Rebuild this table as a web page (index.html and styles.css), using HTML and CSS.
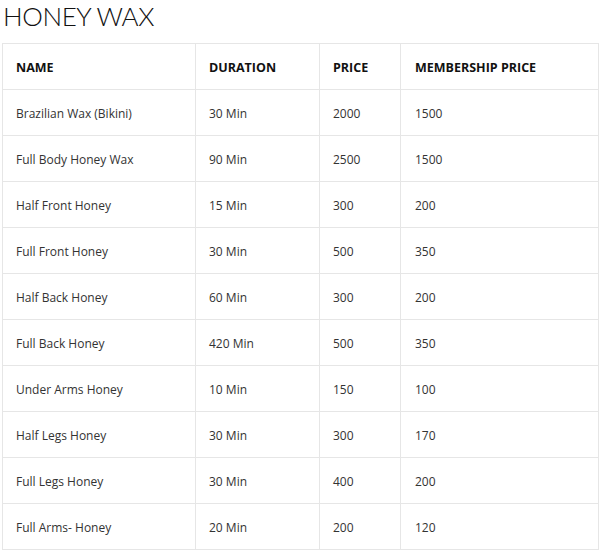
FILE: index.html
```html
<!DOCTYPE html>
<html>
<head>
<meta charset="utf-8">
<link rel="stylesheet" href="styles.css">
</head>
<body>
<h1 class="title">HONEY WAX</h1>
<table class="prices">
<thead>
<tr><th class="c1">NAME</th><th class="c2">DURATION</th><th class="c3">PRICE</th><th class="c4">MEMBERSHIP PRICE</th></tr>
</thead>
<tbody>
<tr><td>Brazilian Wax (Bikini)</td><td>30 Min</td><td>2000</td><td>1500</td></tr>
<tr><td>Full Body Honey Wax</td><td>90 Min</td><td>2500</td><td>1500</td></tr>
<tr><td>Half Front Honey</td><td>15 Min</td><td>300</td><td>200</td></tr>
<tr><td>Full Front Honey</td><td>30 Min</td><td>500</td><td>350</td></tr>
<tr><td>Half Back Honey</td><td>60 Min</td><td>300</td><td>200</td></tr>
<tr><td>Full Back Honey</td><td>420 Min</td><td>500</td><td>350</td></tr>
<tr><td>Under Arms Honey</td><td>10 Min</td><td>150</td><td>100</td></tr>
<tr><td>Half Legs Honey</td><td>30 Min</td><td>300</td><td>170</td></tr>
<tr><td>Full Legs Honey</td><td>30 Min</td><td>400</td><td>200</td></tr>
<tr><td>Full Arms- Honey</td><td>20 Min</td><td>200</td><td>120</td></tr>
</tbody>
</table>
</body>
</html>
```
FILE: styles.css
```css
html, body { margin: 0; padding: 0; background: #fff; }
body { padding: 0 0 0 2px; font-family: "Open Sans", sans-serif; color: #222; }
.title {
  margin: 0;
  padding: 0 0 0 1px;
  height: 43px;
  font-family: "Lato", sans-serif;
  font-weight: 300;
  font-size: 26px;
  line-height: 32px;
  color: #111;
  letter-spacing: -0.4px;
}
.prices {
  border-collapse: collapse;
  width: 597px;
  table-layout: fixed;
}
.prices th, .prices td {
  border: 1px solid #e6e6e6;
  height: 46px;
  padding: 1px 0 0 13px;
  text-align: left;
  font-size: 12px;
  box-sizing: border-box;
}
.prices th { font-weight: 700; color: #111; font-size: 12.5px; }
.prices td { color: #333; }
.prices td:last-child, .prices th:last-child { padding-left: 14px; }
.c1 { width: 193px; }
.c2 { width: 124px; }
.c3 { width: 81px; }
```
